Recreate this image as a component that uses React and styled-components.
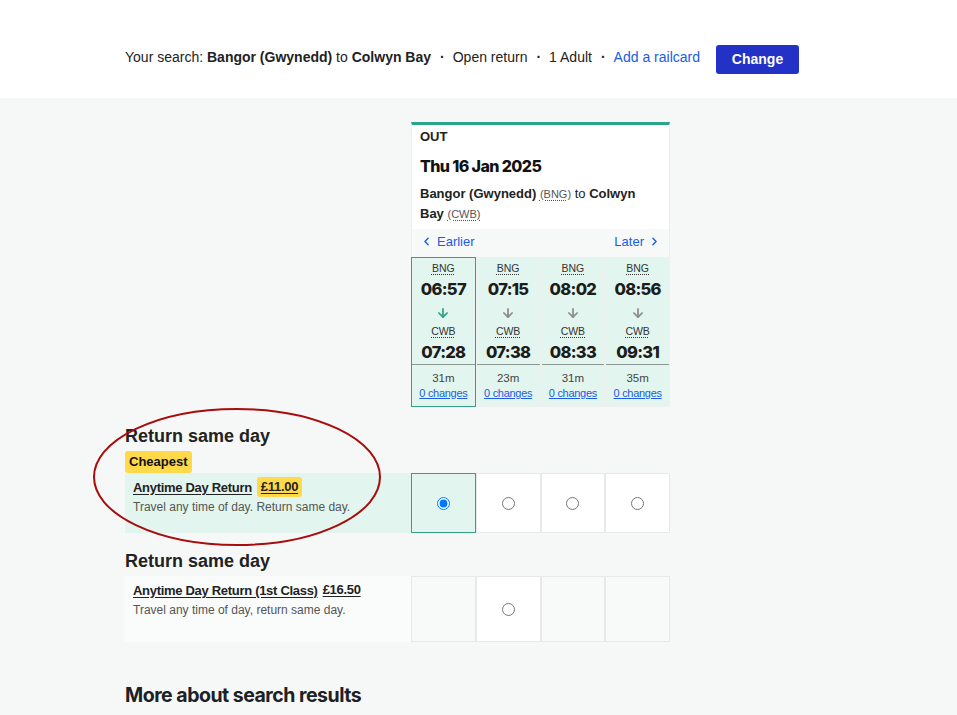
import React from "react";
import styled, { createGlobalStyle } from "styled-components";
import { ArrowDown, ChevronLeft, ChevronRight } from "lucide-react";

const Global = createGlobalStyle`
  html, body { margin: 0; padding: 0; }
  body {
    font-family: "Liberation Sans", Arial, sans-serif;
    color: #222;
    background: #f6f8f7;
  }
  * { box-sizing: border-box; }
`;

const TopBar = styled.header`
  background: #fff;
  height: 98px;
`;

const Container = styled.div`
  width: 707px;
  margin: 0 auto;
  position: relative;
`;

const SearchRow = styled.div`
  display: flex;
  align-items: center;
  padding-top: 45px;
  font-size: 14px;
  color: #222;
  height: 74px;
`;

const SearchText = styled.div`
  display: flex;
  align-items: center;
  margin-bottom: 5px;
`;

const Strong = styled.b`
  font-weight: 700;
`;

const Dot = styled.span`
  margin: 0 8px 0 9px;
  font-weight: 700;
`;

const Link = styled.a`
  color: #1a5ce6;
  text-decoration: none;
`;

const ChangeButton = styled.button`
  margin-left: 16px;
  background: #2331c6;
  color: #fff;
  border: 0;
  border-radius: 3px;
  height: 29px;
  width: 83px;
  padding-bottom: 2px;
  font-family: "Liberation Sans", Arial, sans-serif;
  font-weight: 700;
  font-size: 14px;
`;

const Main = styled.main`
  background: #f6f8f7;
  min-height: 617px;
  padding-top: 24px;
`;

const Split = styled.div`
  display: grid;
  grid-template-columns: 286px 259px;
`;

const Card = styled.section`
  background: #fff;
  border-top: 3px solid #2aa58a;
  border-left: 1px solid #eceeed;
  border-right: 1px solid #eceeed;
`;

const CardHead = styled.div`
  padding: 3px 28px 0 8px;
`;

const OutLabel = styled.div`
  font-size: 13px;
  line-height: 18px;
  font-weight: 700;
`;

const DateTitle = styled.div`
  margin-top: 8px;
  font-family: Inter, "Liberation Sans", sans-serif;
  font-weight: 800;
  font-size: 16px;
  line-height: 24px;
  letter-spacing: -0.6px;
  color: #111;
`;

const Stations = styled.div`
  margin-top: 6px;
  font-size: 13px;
  line-height: 20px;
  color: #222;
`;

const Abbr = styled.abbr`
  font-size: 11px;
  line-height: 1;
  color: #555;
  text-decoration: underline dotted;
  text-underline-offset: 2px;
`;

const Nav = styled.div`
  margin-top: 5px;
  height: 28px;
  background: #f7f9f8;
  display: flex;
  align-items: center;
  justify-content: space-between;
  padding: 0 8px 3px 8px;
  font-size: 13px;
`;

const NavLink = styled.a`
  color: #1a5ce6;
  display: flex;
  align-items: center;
  gap: 4px;
`;

const Columns = styled.div`
  display: grid;
  grid-template-columns: repeat(4, 1fr);
  margin: 0 -1px;
`;

const TimeCell = styled.div`
  background: #e2f5ee;
  border: 1px solid ${(p) => (p.$selected ? "#36a087" : "#eef1f0")};
  text-align: center;
  display: flex;
  flex-direction: column;
`;

const Upper = styled.div`
  padding-top: 3px;
  display: flex;
  flex-direction: column;
  align-items: center;
  border-bottom: 1px solid #8e9894;
  padding-bottom: 1px;
`;

const Code = styled.abbr`
  font-size: 10.5px;
  line-height: 14px;
  color: #333;
  text-decoration: underline dotted;
  text-underline-offset: 2px;
`;

const Time = styled.div`
  margin-top: 3px;
  font-family: Inter, "Liberation Sans", sans-serif;
  font-weight: 800;
  font-size: 16.5px;
  line-height: 22px;
  letter-spacing: -0.7px;
  color: #1c1c1c;
`;

const ArrowWrap = styled.div`
  margin-top: 6px;
  height: 14px;
  margin-bottom: 4px;
  display: flex;
  color: ${(p) => (p.$selected ? "#2aa58a" : "#8c8c8c")};
`;

const Lower = styled.div`
  padding: 5px 0 6px;
  display: flex;
  flex-direction: column;
  align-items: center;
`;

const Duration = styled.div`
  font-size: 11.5px;
  line-height: 16px;
  color: #444;
`;

const Changes = styled.a`
  font-size: 11px;
  line-height: 14px;
  color: #1a5ce6;
  text-decoration: underline;
  letter-spacing: -0.3px;
`;

const SectionHeading = styled.h2`
  margin: ${(p) => p.$top}px 0 0 0;
  font-size: 18px;
  line-height: 22px;
  font-weight: 700;
  color: #222;
`;

const Badge = styled.span`
  display: inline-block;
  background: #ffd94a;
  border-radius: 3px;
  font-weight: 700;
  font-size: 13px;
  line-height: 22px;
  padding: 0 4px;
  color: #111;
`;

const BadgeRow = styled.div`
  margin-top: 4px;
  height: 22px;
  display: flex;
`;

const TicketRow = styled.div`
  display: grid;
  grid-template-columns: 286px 259px;
  margin-top: ${(p) => p.$top || 0}px;
  height: ${(p) => p.$h}px;
`;

const TicketInfo = styled.div`
  background: ${(p) => (p.$cheap ? "#e2f5ee" : "#fafbfb")};
  padding: 4px 8px 0;
`;

const TicketTitle = styled.div`
  display: flex;
  align-items: center;
  gap: 5px;
  height: 20px;
  font-size: 13px;
  font-weight: 700;
  letter-spacing: -0.3px;
`;

const Underlined = styled.span`
  text-decoration: underline;
  text-underline-offset: 2px;
`;

const PriceTag = styled.span`
  background: ${(p) => (p.$hl ? "#ffd94a" : "transparent")};
  border-radius: 3px;
  padding: ${(p) => (p.$hl ? "0 4px" : "0")};
  line-height: 20px;
  text-decoration: underline;
  text-underline-offset: 2px;
`;

const TicketDesc = styled.div`
  margin-top: 2px;
  font-size: 12px;
  line-height: 16px;
  color: #555;
`;

const RadioCells = styled.div`
  display: grid;
  grid-template-columns: repeat(4, 1fr);
`;

const RadioCell = styled.div`
  border: 1px solid ${(p) => (p.$selected ? "#36a087" : "#e6e9e8")};
  background: ${(p) => (p.$selected ? "#e2f5ee" : p.$empty ? "#f8faf9" : "#fff")};
  display: flex;
  align-items: center;
  justify-content: center;
  & input { margin: 0; width: 13px; height: 13px; }
`;

const MoreHeading = styled.h2`
  margin: 41px 0 0;
  font-family: Inter, "Liberation Sans", sans-serif;
  font-size: 19.5px;
  line-height: 24px;
  font-weight: 700;
  letter-spacing: -0.5px;
  color: #1d2124;
`;

const Ellipse = styled.svg`
  position: absolute;
  left: -32px;
  top: 286px;
  pointer-events: none;
  overflow: visible;
`;

const trains = [
  { dep: "06:57", arr: "07:28", dur: "31m", sel: true },
  { dep: "07:15", arr: "07:38", dur: "23m" },
  { dep: "08:02", arr: "08:33", dur: "31m" },
  { dep: "08:56", arr: "09:31", dur: "35m" },
];

export default function App() {
  return (
    <>
      <Global />
      <TopBar>
        <Container>
          <SearchRow>
            <SearchText>
              <span>
                Your search: <Strong>Bangor (Gwynedd)</Strong> to <Strong>Colwyn Bay</Strong>
              </span>
              <Dot>·</Dot>
              <span>Open return</span>
              <Dot>·</Dot>
              <span>1 Adult</span>
              <Dot>·</Dot>
              <Link href="#">Add a railcard</Link>
            </SearchText>
            <ChangeButton>Change</ChangeButton>
          </SearchRow>
        </Container>
      </TopBar>
      <Main>
        <Container>
          <Split>
            <div />
            <Card>
              <CardHead>
                <OutLabel>OUT</OutLabel>
                <DateTitle>Thu 16 Jan 2025</DateTitle>
                <Stations>
                  <Strong>Bangor (Gwynedd)</Strong> <Abbr>(BNG)</Abbr> to <Strong>Colwyn</Strong>{" "}
                  <Strong>Bay</Strong> <Abbr>(CWB)</Abbr>
                </Stations>
              </CardHead>
              <Nav>
                <NavLink>
                  <ChevronLeft size={13} strokeWidth={2.5} /> Earlier
                </NavLink>
                <NavLink>
                  Later <ChevronRight size={13} strokeWidth={2.5} />
                </NavLink>
              </Nav>
              <Columns>
                {trains.map((t) => (
                  <TimeCell key={t.dep} $selected={t.sel}>
                    <Upper>
                      <Code>BNG</Code>
                      <Time>{t.dep}</Time>
                      <ArrowWrap $selected={t.sel}>
                        <ArrowDown size={14} strokeWidth={3} />
                      </ArrowWrap>
                      <Code>CWB</Code>
                      <Time>{t.arr}</Time>
                    </Upper>
                    <Lower>
                      <Duration>{t.dur}</Duration>
                      <Changes href="#">0 changes</Changes>
                    </Lower>
                  </TimeCell>
                ))}
              </Columns>
            </Card>
          </Split>

          <SectionHeading $top={18}>Return same day</SectionHeading>
          <BadgeRow>
            <Badge>Cheapest</Badge>
          </BadgeRow>
          <TicketRow $h={60}>
            <TicketInfo $cheap>
              <TicketTitle>
                <Underlined>Anytime Day Return</Underlined>
                <PriceTag $hl>£11.00</PriceTag>
              </TicketTitle>
              <TicketDesc>Travel any time of day. Return same day.</TicketDesc>
            </TicketInfo>
            <RadioCells>
              <RadioCell $selected>
                <input type="radio" name="r1" defaultChecked />
              </RadioCell>
              <RadioCell>
                <input type="radio" name="r1" />
              </RadioCell>
              <RadioCell>
                <input type="radio" name="r1" />
              </RadioCell>
              <RadioCell>
                <input type="radio" name="r1" />
              </RadioCell>
            </RadioCells>
          </TicketRow>

          <SectionHeading $top={17}>Return same day</SectionHeading>
          <TicketRow $h={66} $top={4}>
            <TicketInfo>
              <TicketTitle>
                <Underlined>Anytime Day Return (1st Class)</Underlined>
                <PriceTag>£16.50</PriceTag>
              </TicketTitle>
              <TicketDesc>Travel any time of day, return same day.</TicketDesc>
            </TicketInfo>
            <RadioCells>
              <RadioCell $empty />
              <RadioCell>
                <input type="radio" name="r2" />
              </RadioCell>
              <RadioCell $empty />
              <RadioCell $empty />
            </RadioCells>
          </TicketRow>

          <MoreHeading>More about search results</MoreHeading>

          <Ellipse width="288" height="138" viewBox="0 0 288 138">
            <ellipse cx="144" cy="69" rx="143" ry="68" fill="none" stroke="#a80d0d" strokeWidth="2" />
          </Ellipse>
        </Container>
      </Main>
    </>
  );
}
